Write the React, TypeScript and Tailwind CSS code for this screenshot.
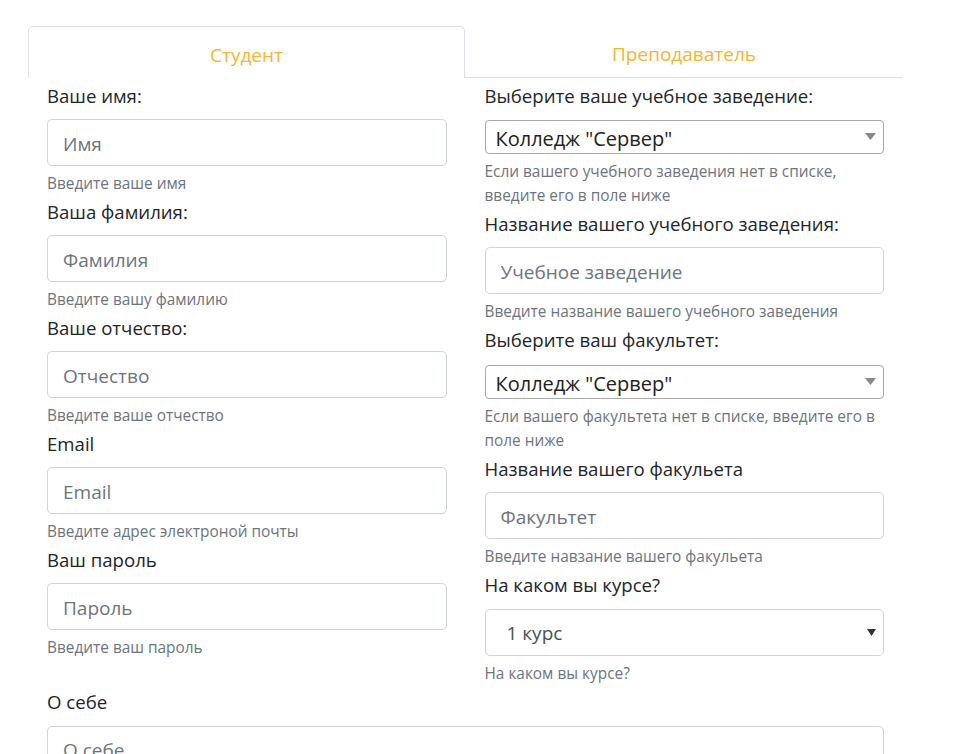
import React from "react";

const font = { fontFamily: '"Segoe UI", "Open Sans", "Noto Sans", sans-serif' };

function Label({ children }: { children: React.ReactNode }) {
  return <label className="block text-[18.6px] leading-[27px] text-[#212529]">{children}</label>;
}

function Help({ children }: { children: React.ReactNode }) {
  return <p className="mt-[6px] text-[15.4px] leading-[24px] text-[#6c757d]">{children}</p>;
}

function Field({ label, placeholder, help }: { label: string; placeholder: string; help: string }) {
  return (
    <div className="mb-[2px]">
      <Label>{label}</Label>
      <input
        placeholder={placeholder}
        className="mt-[10px] block h-[47px] w-full rounded-[5px] border border-[#ced4da] px-[15px] pt-[2px] text-[19px] text-[#495057] placeholder:text-[#6c757d] outline-none"
      />
      <Help>{help}</Help>
    </div>
  );
}

function PlainSelect({ label, value, help, mt }: { label: string; value: string; help: string; mt: string }) {
  return (
    <div className="mb-[2px]">
      <Label>{label}</Label>
      <div className={`relative ${mt}`}>
        <select className="block h-[34px] w-full appearance-none rounded-[4px] border border-[#a9a9a9] bg-white pl-[10px] pt-[2px] text-[20px] leading-[32px] text-[#222] outline-none">
          <option>{value}</option>
        </select>
        <svg className="pointer-events-none absolute right-[8px] top-[13px]" width="11" height="7" viewBox="0 0 11 7">
          <path d="M0 0h11L5.5 7z" fill="#888" />
        </svg>
      </div>
      <Help>{help}</Help>
    </div>
  );
}

export default function App() {
  return (
    <div className="h-[754px] overflow-hidden bg-white" style={font}>
      <div className="pt-[26px] pl-[28px] w-[903px]">
        {/* вкладки */}
        <div className="flex">
          <div className="flex h-[52px] w-[437px] items-center justify-center rounded-t-[5px] border border-b-0 border-[#dee2e6] pt-[5px] text-[19px] text-[#f3b633]">
            Студент
          </div>
          <div className="flex h-[52px] flex-1 items-center justify-center border-b border-[#dee2e6] pt-[5px] text-[19px] text-[#f3b633]">
            Преподаватель
          </div>
        </div>

        <div className="px-[19px] pt-[4px]">
          <div className="grid grid-cols-2 gap-x-[38px]">
            <div>
              <Field label="Ваше имя:" placeholder="Имя" help="Введите ваше имя" />
              <Field label="Ваша фамилия:" placeholder="Фамилия" help="Введите вашу фамилию" />
              <Field label="Ваше отчество:" placeholder="Отчество" help="Введите ваше отчество" />
              <Field label="Email" placeholder="Email" help="Введите адрес электроной почты" />
              <Field label="Ваш пароль" placeholder="Пароль" help="Введите ваш пароль" />
            </div>
            <div>
              <PlainSelect
                label="Выберите ваше учебное заведение:"
                value={'Колледж "Сервер"'}
                help="Если вашего учебного заведения нет в списке, введите его в поле ниже"
                mt="mt-[11px]"
              />
              <Field
                label="Название вашего учебного заведения:"
                placeholder="Учебное заведение"
                help="Введите название вашего учебного заведения"
              />
              <PlainSelect
                label="Выберите ваш факультет:"
                value={'Колледж "Сервер"'}
                help="Если вашего факультета нет в списке, введите его в поле ниже"
                mt="mt-[12px]"
              />
              <Field label="Название вашего факульета" placeholder="Факультет" help="Введите навзание вашего факульета" />
              <div>
                <Label>На каком вы курсе?</Label>
                <div className="relative mt-[11px]">
                  <select className="block h-[47px] w-full appearance-none rounded-[5px] border border-[#ced4da] bg-white pl-[21px] pt-[2px] text-[19px] text-[#495057] outline-none">
                    <option>1 курс</option>
                  </select>
                  <svg className="pointer-events-none absolute right-[8px] top-[20px]" width="9" height="7" viewBox="0 0 9 7">
                    <path d="M0 0h9L4.5 7z" fill="#333" />
                  </svg>
                </div>
                <Help>На каком вы курсе?</Help>
              </div>
            </div>
          </div>

          <div className="mt-[2px]">
            <Label>О себе</Label>
            <textarea
              placeholder="О себе"
              className="mt-[11px] block h-[120px] w-full resize-none rounded-[5px] border border-[#ced4da] px-[15px] pt-[9px] text-[19px] text-[#495057] placeholder:text-[#6c757d] outline-none"
            />
          </div>
        </div>
      </div>
    </div>
  );
}
